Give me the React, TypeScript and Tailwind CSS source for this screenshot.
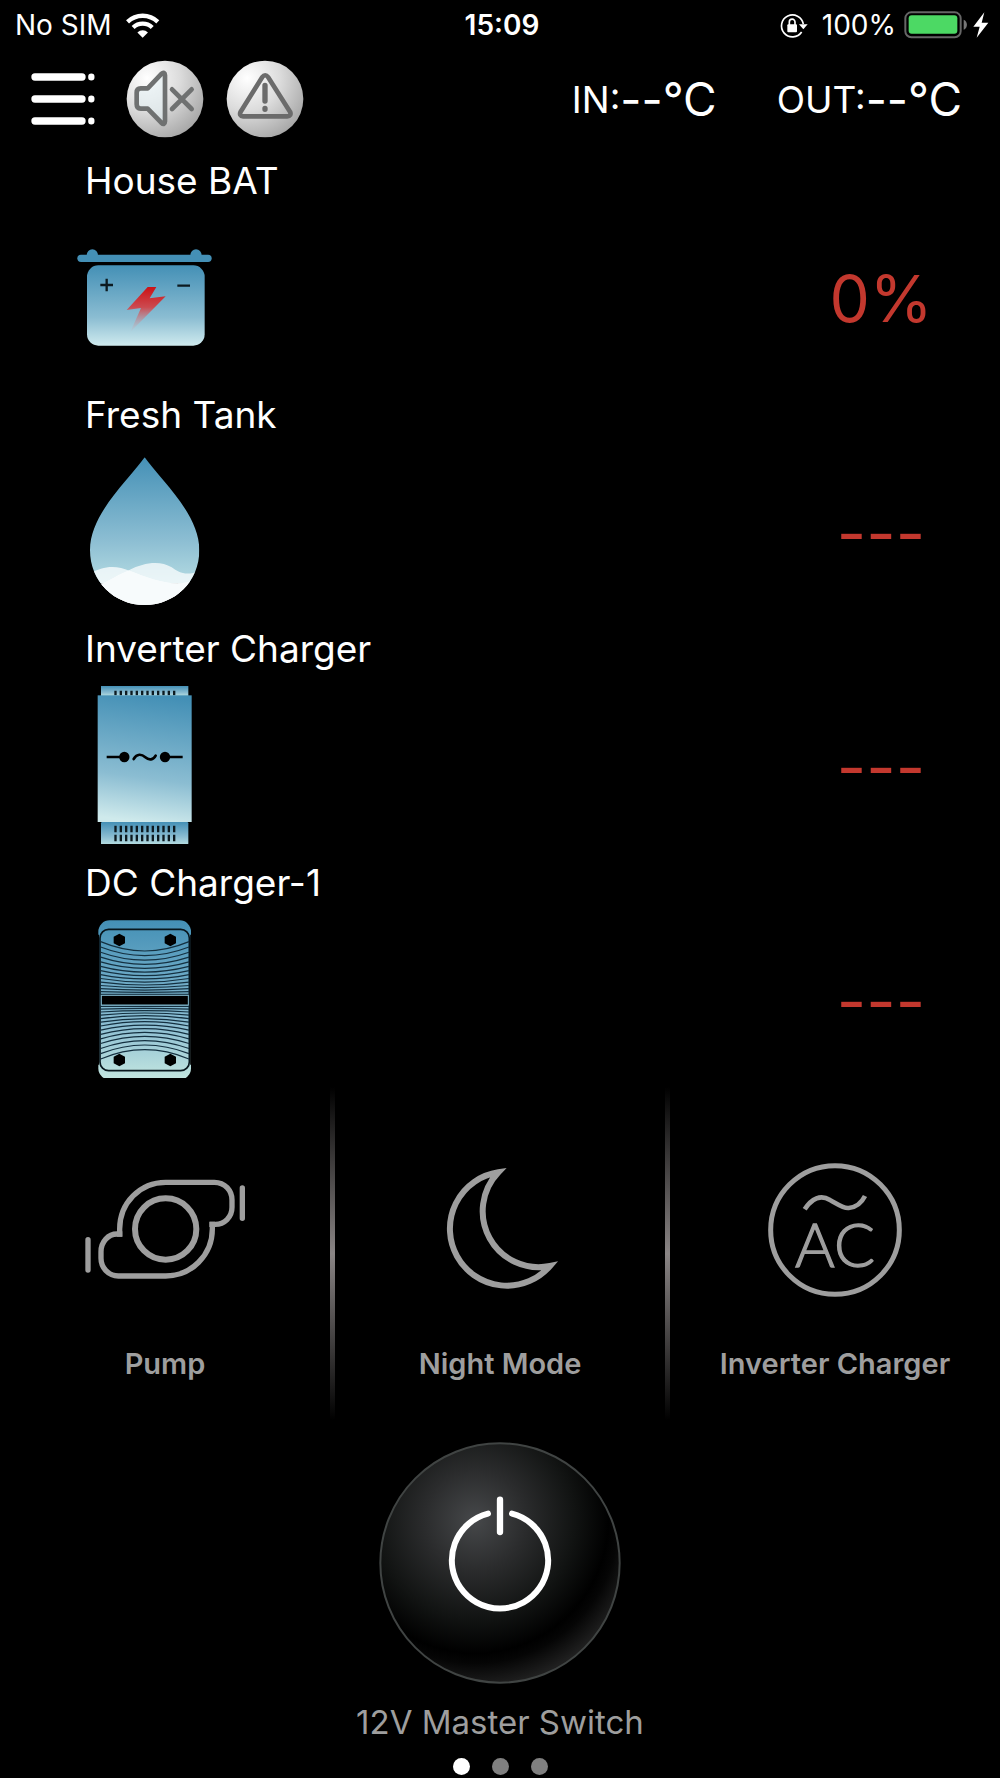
import { Fragment, type ReactNode } from "react";

type Reading = { name: string; value: string; icon: ReactNode };
type Control = { name: string; icon: ReactNode };

const GREY = "#9e9e9e";

function BlueGradient({ id, end = "#cfeaee" }: { id: string; end?: string }) {
  return (
    <linearGradient id={id} x1="0" y1="0" x2="0" y2="1">
      <stop offset="0" stopColor="#4490b6" />
      <stop offset="0.65" stopColor="#8bbdd2" />
      <stop offset="1" stopColor={end} />
    </linearGradient>
  );
}

function HouseBatteryIcon() {
  return (
    <svg viewBox="15 -42 480 480" className="size-40" aria-hidden="true">
      <defs>
        <BlueGradient id="battery" />
        <linearGradient id="spark" x1="0" y1="0" x2="0" y2="1">
          <stop offset="0" stopColor="#cc1216" />
          <stop offset="0.45" stopColor="#cc4a50" />
          <stop offset="1" stopColor="#b9c4d0" stopOpacity="0.2" />
        </linearGradient>
      </defs>
      <rect x="52" y="74" width="403" height="22" rx="11" fill="#4490b6" />
      <path d="M80 76a17 18 0 0 1 34 0zM391 76a17 18 0 0 1 34 0z" fill="#4490b6" />
      <rect x="81" y="106" width="353" height="241" rx="34" fill="url(#battery)" />
      <path d="M121 165h38M140 146v38M352 167h38" stroke="#0c1a20" strokeWidth="7" />
      <path d="M263 171h26l-20 34 48-6-106 107 32-72-43 6z" fill="url(#spark)" />
    </svg>
  );
}

function FreshTankIcon() {
  return (
    <svg viewBox="15 180 480 480" className="size-40" aria-hidden="true">
      <defs>
        <BlueGradient id="drop" end="#b4dbe2" />
        <clipPath id="drop-shape">
          <path d="M254 202C300 268 418 370 418 480C418 575 345 645 254 645S90 575 90 480C90 370 208 268 254 202Z" />
        </clipPath>
      </defs>
      <g clipPath="url(#drop-shape)">
        <rect x="80" y="200" width="350" height="380" fill="url(#drop)" />
        <path d="M80 560C120 525 170 525 208 542C260 562 310 582 360 580C390 578 410 570 430 550V650H80Z" fill="#fff" fillOpacity="0.75" />
        <path d="M80 600C130 585 160 560 208 540C250 518 300 510 335 532C360 550 385 562 430 535V650H80Z" fill="#fff" fillOpacity="0.72" />
        <path d="M80 600C130 585 160 560 208 542C260 562 310 582 360 580C390 578 410 570 430 550V650H80Z" fill="#f7fbfc" />
      </g>
    </svg>
  );
}

function InverterIcon() {
  return (
    <svg viewBox="15 162 480 480" className="size-40" aria-hidden="true">
      <defs>
        <linearGradient id="inverter" x1="0.55" y1="0" x2="0.45" y2="1">
          <stop offset="0" stopColor="#4490b6" />
          <stop offset="0.65" stopColor="#8bbdd2" />
          <stop offset="1" stopColor="#cfeaec" />
        </linearGradient>
        <BlueGradient id="inverter-cap" end="#b5dde0" />
      </defs>
      <rect x="123" y="168" width="262" height="30" fill="url(#inverter-cap)" />
      <rect x="123" y="576" width="262" height="68" rx="4" fill="url(#inverter-cap)" />
      <path d="M163 189H347" stroke="#0d1a20" strokeWidth="14" strokeDasharray="7 9" />
      <path d="M163 597H347M163 624H347" stroke="#0d1a20" strokeWidth="19" strokeDasharray="7 9" />
      <rect x="113" y="196" width="282" height="380" fill="url(#inverter)" />
      <path d="M140 381H193M315 381H368" stroke="#000" strokeWidth="8" />
      <circle cx="193" cy="381" r="15.5" />
      <circle cx="315" cy="381" r="15.5" />
      <path d="M221 387C231 370 245 372 256 382S280 390 287 377" fill="none" stroke="#000" strokeWidth="8" strokeLinecap="round" />
    </svg>
  );
}

const GRILLE = Array.from({ length: 14 }, (_, i) => {
  const t = i / 13;
  const edge = 245 + 214 * t - 56 * t * t;
  return { edge, middle: edge + 28 * (1 - t) };
});

function DcChargerIcon() {
  return (
    <svg viewBox="15 174 480 480" className="size-40" aria-hidden="true">
      <defs>
        <BlueGradient id="dc" end="#c3e6e0" />
      </defs>
      <rect x="115" y="181" width="278" height="478" rx="34" fill="url(#dc)" />
      <rect x="120" y="208" width="268" height="424" rx="26" fill="none" stroke="#08161d" strokeWidth="5" />
      <path d="M113 224V614M395 224V614" stroke="#000" strokeWidth="9" />
      <g fill="none" stroke="#143040" strokeWidth="3.6">
        {GRILLE.map(({ edge, middle }) => (
          <path key={edge} d={`M122 ${edge}Q254 ${2 * middle - edge} 387 ${edge}M122 ${842 - edge}Q254 ${842 - 2 * middle + edge} 387 ${842 - edge}`} />
        ))}
      </g>
      <rect x="124" y="406" width="261" height="29" stroke="#7fb4c8" strokeWidth="3" />
      {[[178, 240], [331, 240], [178, 600], [331, 600]].map(([x, y]) => (
        <path key={`${x}-${y}`} d={`M${x} ${y - 19}l17 9v20l-17 9-17-9v-20z`} />
      ))}
    </svg>
  );
}

function PumpIcon() {
  return (
    <svg viewBox="45 180 540 540" className="size-[180px]" fill="none" stroke={GREY} strokeWidth="16" aria-hidden="true">
      <circle cx="317" cy="447" r="92" strokeWidth="18" />
      <path d="M179 470V447C179 369 240 307 317 307H463C495 307 516 332 516 360V382C516 412 493 433 466 433H448" />
      <path d="M457 425V447C457 525 394 588 317 588H175C145 588 123 563 123 535V515C123 485 145 462 171 462H187" />
      <path d="M84 479V570M547 324V415" strokeLinecap="round" />
    </svg>
  );
}

function MoonIcon() {
  return (
    <svg viewBox="30 0 540 540" className="size-[180px]" fill="none" stroke={GREY} strokeWidth="18" aria-hidden="true">
      <path d="M295 97A171 171 0 1 0 450 378A168 168 0 0 1 295 97Z" />
    </svg>
  );
}

function AcIcon() {
  return (
    <svg viewBox="135 0 540 540" className="size-[180px]" fill="none" aria-hidden="true">
      <circle cx="405" cy="270" r="193" stroke={GREY} strokeWidth="15" />
      <path d="M314 208C335 175 362 163 390 180C412 192 430 206 446 204C468 202 484 190 495 168" stroke={GREY} strokeWidth="14" />
      <text x="405" y="381" textAnchor="middle" fontFamily="Lato, sans-serif" fontWeight="300" fontSize="182" fill={GREY} stroke={GREY} strokeWidth="4">
        AC
      </text>
    </svg>
  );
}

function PowerIcon() {
  return (
    <svg viewBox="114 63 732 732" className="size-[244px]" aria-hidden="true">
      <defs>
        <radialGradient id="knob" gradientUnits="userSpaceOnUse" cx="405" cy="300" r="500">
          <stop offset="0" stopColor="#46484a" />
          <stop offset="0.3" stopColor="#2b2c2d" />
          <stop offset="0.6" stopColor="#111312" />
          <stop offset="0.8" stopColor="#000" />
          <stop offset="0.86" stopColor="#050505" />
          <stop offset="1" stopColor="#1f1f1f" />
        </radialGradient>
      </defs>
      <circle cx="480" cy="429" r="359" fill="url(#knob)" stroke="#404443" strokeWidth="6" />
      <g fill="none" stroke="#fff" strokeWidth="18" strokeLinecap="round">
        <path d="M480 239V336" strokeWidth="19" />
        <path d="M444 281A144.500 144.500 0 1 0 516 281" />
      </g>
    </svg>
  );
}

function Orb({ id }: { id: string }) {
  return (
    <>
      <defs>
        <radialGradient id={id} cx="0.27" cy="0.23" r="0.85">
          <stop offset="0" stopColor="#fff" />
          <stop offset="0.5" stopColor="#dcdcdc" />
          <stop offset="1" stopColor="#a8a8a8" />
        </radialGradient>
      </defs>
      <circle cx="117" cy="117" r="115" fill={`url(#${id})`} />
    </>
  );
}

const READINGS: Reading[] = [
  { name: "House BAT", value: "0%", icon: <HouseBatteryIcon /> },
  { name: "Fresh Tank", value: "---", icon: <FreshTankIcon /> },
  { name: "Inverter Charger", value: "---", icon: <InverterIcon /> },
  { name: "DC Charger-1", value: "---", icon: <DcChargerIcon /> },
];

const CONTROLS: Control[] = [
  { name: "Pump", icon: <PumpIcon /> },
  { name: "Night Mode", icon: <MoonIcon /> },
  { name: "Inverter Charger", icon: <AcIcon /> },
];

function StatusBar() {
  return (
    <div className="grid h-[50px] grid-cols-3 items-center pr-[11px] pl-[15px] text-[28px] leading-none">
      <div className="flex items-center gap-[14px]">
        <span>No SIM</span>
        <svg viewBox="378 34 102 76" className="h-[25px] w-[34px]" fill="none" stroke="#fff" aria-label="Wi-Fi">
          <path d="M382 61A66 66 0 0 1 474 61" strokeWidth="13" />
          <path d="M399 78A42 42 0 0 1 457 78" strokeWidth="13" />
          <path d="M428 109L412 93A23 23 0 0 1 444 93Z" fill="#fff" stroke="none" />
        </svg>
      </div>
      <span className="text-center font-semibold">15:09</span>
      <div className="flex items-center justify-end">
        <svg viewBox="114 32 87 81" className="h-[27px] w-[29px]" fill="none" stroke="#fff" strokeWidth="5" aria-label="Rotation lock">
          <path d="M187 68A33 33 0 1 0 182 92" />
          <path d="M174 69H200L187 84Z" fill="#fff" stroke="none" />
          <rect x="139" y="69" width="29" height="24" rx="3" fill="#fff" stroke="none" />
          <path d="M145 71V62a8.500 8.500 0 0 1 17 0V71" />
        </svg>
        <span className="ml-[14px]">100%</span>
        <svg viewBox="489 32 189 84" className="ml-2 h-7 w-[63px]" aria-label="Battery full">
          <rect x="493" y="36" width="166" height="75" rx="18" fill="none" stroke="#666" strokeWidth="6" />
          <rect x="503" y="45" width="146" height="55" rx="9" fill="#4cd964" />
          <path d="M668 58C681 62 681 84 668 88Z" fill="#777" />
        </svg>
        <svg viewBox="698 35 48 78" className="ml-[6px] h-[26px] w-4" aria-label="Charging">
          <path d="M732 36L699 79H718L709 112L744 67H724Z" fill="#fff" />
        </svg>
      </div>
    </div>
  );
}

function Temperature({ label }: { label: string }) {
  return (
    <div className="flex items-center leading-none">
      <span className="text-[37px]">{label}:</span>
      <span className="text-[46px]">--°C</span>
    </div>
  );
}

function Header() {
  return (
    <header className="flex h-[98px] items-center pr-[38px] pl-[31px]">
      <button type="button" aria-label="Menu">
        <svg viewBox="93 201 192 192" className="size-16" stroke="#fff" strokeLinecap="round" strokeWidth="22">
          <path d="M105 231H246M105 297H246M105 363H246" />
          <path d="M274 230V232M274 296V298M274 362V364" strokeWidth="19" />
        </svg>
      </button>
      <button type="button" aria-label="Mute" className="ml-[31px]">
        <svg viewBox="0 0 234 234" className="size-[78px]">
          <Orb id="mute-orb" />
          <g fill="none" stroke="#6f7171" strokeWidth="14" strokeLinecap="round" strokeLinejoin="round">
            <path d="M44 85H65L107 41C112 36 117 38 117 46V184C117 192 112 194 107 189L65 146H44C36 146 32 141 32 133V98C32 90 36 85 44 85Z" fill="#e6f2f5" fillOpacity="0.55" />
            <path d="M138 88L197 147M197 88L138 147" />
          </g>
        </svg>
      </button>
      <button type="button" aria-label="Warnings" className="ml-[22px]">
        <svg viewBox="0 0 234 234" className="size-[78px]">
          <Orb id="warning-orb" />
          <g fill="none" stroke="#6b6b6b" strokeWidth="14" strokeLinecap="round" strokeLinejoin="round">
            <path d="M109 51C114 44 121 44 126 51L192 155C196 163 192 169 184 169H51C43 169 40 163 44 155Z" />
            <path d="M117 76V123M117 145V148" strokeWidth="16" />
          </g>
        </svg>
      </button>
      <div className="ml-auto flex gap-[60px]">
        <Temperature label="IN" />
        <Temperature label="OUT" />
      </div>
    </header>
  );
}

export default function App() {
  return (
    <div className="min-h-screen bg-black font-['Inter','Liberation_Sans',sans-serif] text-white">
      <StatusBar />
      <Header />

      <main>
        <section className="mt-[9px] flex flex-col gap-[15px]" aria-label="Readings">
          {READINGS.map(({ name, value, icon }) => (
            <article key={name}>
              <h2 className="pl-[85px] text-[37px] leading-[48px]">{name}</h2>
              <div className="mt-[11px] flex items-center justify-between pr-[59px] pl-[65px]">
                {icon}
                <span className="w-[120px] pt-[6px] text-center text-[64px] leading-none text-[#c3382e]">{value}</span>
              </div>
            </article>
          ))}
        </section>

        <section className="mt-[9px] grid grid-cols-[1fr_5px_1fr_5px_1fr]" aria-label="Controls">
          {CONTROLS.map(({ name, icon }, index) => (
            <Fragment key={name}>
              {index > 0 && <div className="bg-linear-to-b/srgb from-black via-[#8a8585] to-black" />}
              <button type="button" className="flex flex-col items-center pt-[53px] pb-9 text-[#9e9e9e]">
                {icon}
                <span className="mt-6 text-[29px] leading-10 font-semibold whitespace-nowrap">{name}</span>
              </button>
            </Fragment>
          ))}
        </section>

        <section className="mt-[21px] flex flex-col items-center" aria-label="Master switch">
          <button type="button" className="flex flex-col items-center text-[#9e9e9e]">
            <PowerIcon />
            <span className="mt-[17px] text-[33px] leading-10">12V Master Switch</span>
          </button>
          <nav className="mt-4 mb-[3px] flex gap-[22px]" aria-label="Pages">
            <button type="button" aria-label="Page 1" aria-current="page" className="size-[17px] rounded-full bg-white" />
            <button type="button" aria-label="Page 2" className="size-[17px] rounded-full bg-[#808080]" />
            <button type="button" aria-label="Page 3" className="size-[17px] rounded-full bg-[#808080]" />
          </nav>
        </section>
      </main>
    </div>
  );
}
